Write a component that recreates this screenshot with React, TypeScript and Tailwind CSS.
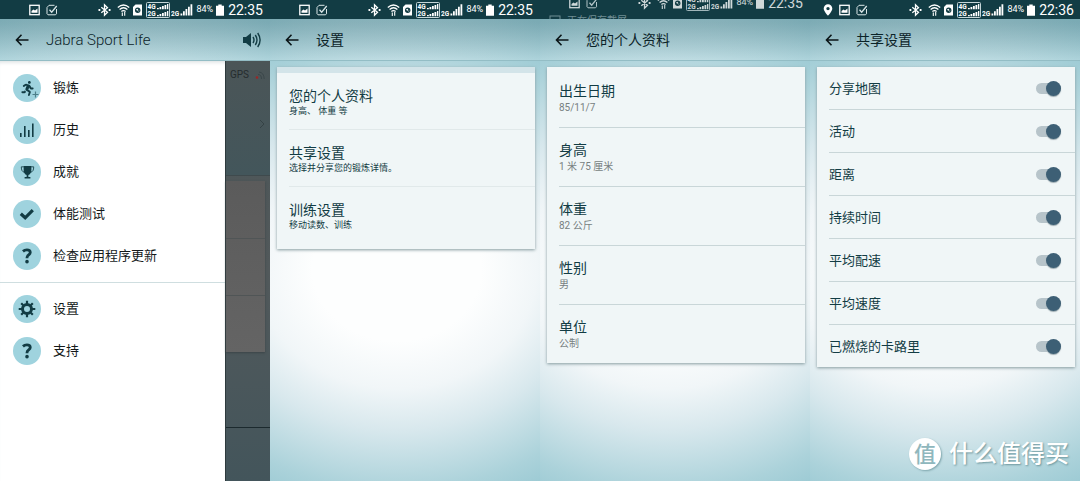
import type { ReactNode } from 'react';
import { FaRunning } from 'react-icons/fa';

const profileRows = [
  { title: '出生日期', value: '85/11/7' },
  { title: '身高', value: '1 米 75 厘米' },
  { title: '体重', value: '82 公斤' },
  { title: '性别', value: '男' },
  { title: '单位', value: '公制' },
];

const settingsRows = [
  { title: '您的个人资料', value: '身高、 体重 等' },
  { title: '共享设置', value: '选择并分享您的锻炼详情。' },
  { title: '训练设置', value: '移动读数、训练' },
];

const shareRows = ['分享地图', '活动', '距离', '持续时间', '平均配速', '平均速度', '已燃烧的卡路里'];

const screenBg =
  'bg-[radial-gradient(130%_62%_at_47%_56%,#fdfefe_24%,#f1f6f8_40%,#d8e8ed_54%,#abd2da_74%,#8cc2cd_92%)]';

function BarsIcon() {
  return (
    <svg width="16" height="16" viewBox="0 0 16 16" fill="#123c44">
      <rect x="1" y="11" width="1.6" height="4" />
      <rect x="5" y="4" width="1.6" height="11" />
      <rect x="9" y="8" width="1.6" height="7" />
      <rect x="13" y="1.5" width="1.6" height="13.5" />
    </svg>
  );
}

function RunIcon() {
  return (
    <span className="relative">
      <FaRunning size={15} color="#123c44" />
      <svg className="absolute -right-1 -bottom-0.5" width="7" height="7" viewBox="0 0 7 7">
        <path d="M3.5 .5v6M.5 3.5h6" stroke="#4d7f89" strokeWidth="1.2" />
      </svg>
    </span>
  );
}

function TrophyIcon() {
  return (
    <svg width="15" height="15" viewBox="0 0 14 14" fill="#123c44">
      <path d="M3.4 1h7.2v3.6c0 2.6-1.2 4.2-2.8 4.7v1.9h1.9v1.5H4.3v-1.5h1.9V9.3C4.6 8.8 3.4 7.2 3.4 4.6z" />
      <path
        d="M3.6 1.7H1.2c0 3 .9 4.7 3 5.2M10.4 1.7h2.4c0 3-.9 4.7-3 5.2"
        fill="none"
        stroke="#123c44"
        strokeWidth=".8"
      />
    </svg>
  );
}

function CheckIcon() {
  return (
    <svg width="16" height="14" viewBox="0 0 16 14">
      <path d="M1.8 6.8l4.4 4 7.6-7.6" fill="none" stroke="#123c44" strokeWidth="3.2" />
    </svg>
  );
}

function HelpIcon() {
  return (
    <svg width="14" height="18" viewBox="0 0 12 16">
      <path
        d="M2.4 3.9C3.400 3 4.600 2.600 5.900 2.600c1.900 0 3 .9 3 2.300 0 2.200-2.900 2.200-2.900 4.600v.5"
        fill="none"
        stroke="#123c44"
        strokeWidth="2.5"
      />
      <circle cx="6" cy="13" r="1.600" fill="#123c44" />
    </svg>
  );
}

function GearIcon() {
  return (
    <svg width="18" height="18" viewBox="-9 -9 18 18" fill="none" stroke="#123c44">
      <circle r="4.500" strokeWidth="3" />
      <path
        d="M0-8.300V-5M0 5v3.300M-8.300 0H-5M5 0h3.300M-5.800-5.800l2 2M3.800 3.800l2 2M5.800-5.800l-2 2M-3.800 3.800l-2 2"
        strokeWidth="2.200"
      />
    </svg>
  );
}

const drawerMain = [
  { label: '锻炼', icon: <RunIcon /> },
  { label: '历史', icon: <BarsIcon /> },
  { label: '成就', icon: <TrophyIcon /> },
  { label: '体能测试', icon: <CheckIcon /> },
  { label: '检查应用程序更新', icon: <HelpIcon /> },
];

const drawerExtra = [
  { label: '设置', icon: <GearIcon /> },
  { label: '支持', icon: <HelpIcon /> },
];

function StatusIcons({ time, pin }: { time: string; pin?: boolean }) {
  return (
    <div className={`flex h-[19px] shrink-0 items-center justify-between ${pin ? 'pr-[6px] pl-[13px]' : 'pr-[7px] pl-[29px]'}`}>
      <div className="flex items-center gap-[6px]">
        {pin && (
          <svg width="10" height="12" viewBox="0 0 10 12" fill="#fff" fillRule="evenodd">
            <path d="M5 .3A4.300 4.300 0 0 0 .7 4.600C.7 7.500 5 11.800 5 11.800s4.300-4.300 4.300-7.200A4.300 4.300 0 0 0 5 .3zm0 2.600a1.700 1.700 0 1 1 0 3.400 1.700 1.700 0 0 1 0-3.400z" />
          </svg>
        )}
        <svg width="11" height="12" viewBox="0 0 11 12" fill="none">
          <rect x=".8" y="1.300" width="9.400" height="9.400" stroke="#fff" strokeWidth="1.300" />
          <path d="M2.500 8.800V7l2-1.500 1.500 1 2.500-2v4.300z" fill="#fff" />
        </svg>
        <svg width="12" height="12" viewBox="0 0 12 12" fill="none" stroke="#dbe7e9">
          <path d="M8.500 1.300H3L1 3.500v6.300l1 1h7.500l1-1V5" />
          <path d="M3.500 5.800l2.200 2.400 5-6.200" strokeWidth="1.300" />
        </svg>
      </div>
      <div className="flex items-center">
        <svg width="13" height="14" viewBox="0 0 13 14" fill="none" stroke="#fff" strokeWidth="1.300">
          <path d="M3.300 4.300l6.200 5-3 3V1.700l3 3-6.200 5" />
          <path d="M.5 7h1.800M10.700 7h1.800" strokeWidth="1.800" />
        </svg>
        <svg className="ml-[6px]" width="13" height="14" viewBox="0 0 13 14" fill="none" stroke="#fff" strokeWidth="1.300">
          <path d="M.8 4.500Q6.500-.5 12.200 4.500M2.600 6.500q3.900-3.500 7.800 0M4.400 8.500q2.100-1.700 4.200 0" />
          <path d="M5.300 13V9.500M7.700 9v3.800" strokeWidth="1.100" />
        </svg>
        <svg className="ml-[3px]" width="9" height="12" viewBox="0 0 9 12">
          <path d="M2.500.5H9v11H0V3z" fill="#fff" />
          <circle cx="4.700" cy="6.300" r="2.700" fill="#123c44" />
          <path d="M3 5.500l1.500-.8.700 1L4.300 7zM5.500 6.500l1 .3-.8 1.200z" fill="#fff" />
        </svg>
        <svg className="ml-[4px]" width="24" height="16" viewBox="0 0 24 16" fill="#fff">
          <rect x=".5" y=".5" width="23" height="15" rx="1" fill="none" stroke="#c5d5d8" />
          <text x="1.500" y="7" fontSize="6.500" fontWeight="700">4G</text>
          <text x="1.500" y="14" fontSize="6.500" fontWeight="700">2G</text>
          <path d="M11 7.300V6h1.800v1.300zM13.500 7.300V5h1.800v2.300zM16 7.300V4h1.800v3.300zM18.500 7.300V3h1.800v4.300zM21 7.300V2h1.300v5.300z" />
          <path d="M11 14.300V13h1.800v1.300zM13.500 14.300V12h1.800v2.300zM16 14.300V11h1.800v3.300zM18.500 14.300V10h1.800v4.300zM21 14.300V9h1.300v5.300z" />
        </svg>
        <svg className="ml-px" width="22" height="14" viewBox="0 0 22 14" fill="#fff">
          <text x="0" y="12.500" fontSize="6.500" fontWeight="700">2G</text>
          <path d="M9.500 12.500V10.500h1.800v2zM12 12.500V8.300h1.800v4.200zM14.500 12.500V6h1.800v6.500zM17 12.500V3.700h1.800v8.800zM19.500 12.500V1.300h1.800v11.200z" />
        </svg>
        <span className="ml-[3px] text-[9px] leading-none">84%</span>
        <svg className="ml-[3px]" width="8" height="12" viewBox="0 0 8 12" fill="#fff">
          <path d="M2.300.5h3.400v1.200H8v10H0v-10h2.300z" />
        </svg>
        <span className="ml-[4px] text-[14px] leading-none">{time}</span>
      </div>
    </div>
  );
}

function StatusBar({ children }: { children: ReactNode }) {
  return (
    <div className="flex h-[19px] shrink-0 flex-col overflow-hidden bg-[#123c44] text-white">{children}</div>
  );
}

function Toolbar({ title, children }: { title: string; children?: ReactNode }) {
  return (
    <header className="flex h-[42px] shrink-0 items-center border-b border-[#93bdc5] bg-linear-to-b from-black/12 to-white/15 pt-px pr-[8px] pl-[15px] text-[#0b2328]">
      <button type="button" aria-label="返回" className="mr-[17px]">
        <svg width="14" height="12" viewBox="0 0 14 12" fill="none" stroke="#0b1517" strokeWidth="1.600">
          <path d="M6.500 .8L1.500 6l5 5.200M1.500 6h12" />
        </svg>
      </button>
      {children ?? <h1 className="text-[14px]">{title}</h1>}
    </header>
  );
}

function DrawerItem({ label, icon }: { label: string; icon: ReactNode }) {
  return (
    <li>
      <button type="button" className="flex h-[42px] w-full items-center gap-3 px-[13px] text-left text-[13px] text-[#14191a]">
        <span className="flex size-[28px] items-center justify-center rounded-full bg-[#9fd3de]">{icon}</span>
        {label}
      </button>
    </li>
  );
}

// Main page of the app, dimmed while the drawer is open
function DimmedPage() {
  return (
    <div className="flex flex-1 flex-col border-l border-[#2e3a3d] bg-linear-to-b from-[#4b5557] via-[#52595b] to-[#43555b] text-[#252c2e]">
      <div className="flex h-[115px] flex-col justify-between border-b border-[#3f4a4d] bg-linear-to-b from-[#4b5557] to-[#43565b] pt-[6px] pr-[4px] pl-[4px]">
        <div className="flex items-center justify-between text-[10px]">
          GPS
          <svg width="11" height="10" viewBox="0 0 11 10" fill="none" stroke="#3b474a">
            <path d="M3 4.500q3.500 0 3.500 4.500M4 2q5 .500 5.200 7" />
            <circle cx="2" cy="7.500" r="1.300" fill="#9b2626" stroke="none" />
          </svg>
        </div>
        <svg className="mb-[46px] self-end" width="8" height="10" viewBox="0 0 8 10" fill="none" stroke="#354245">
          <path d="M2 1l4 4-4 4" />
        </svg>
      </div>
      <div className="mt-[5px] mr-[5px] flex flex-col bg-linear-to-b from-[#5b5b5b] to-[#646464] shadow-[0_1px_2px_#3b4447]">
        <div className="h-[58px] border-b border-[#505556]" />
        <div className="h-[57px] border-b border-[#505556]" />
        <div className="h-[56px]" />
      </div>
      <div className="mt-[75px] flex-1 border-t border-[#1c2a2e]" />
    </div>
  );
}

function Card({ className = '', children }: { className?: string; children: ReactNode }) {
  return (
    <ul className={`mt-[6px] mr-[5px] ml-[7px] bg-[#f0f6f7] text-[#123c44] shadow-[0_1px_3px_#849a9e] ${className}`}>
      {children}
    </ul>
  );
}

export default function App() {
  return (
    <main className="relative grid min-h-screen grid-cols-4 font-[Roboto,'Noto_Sans_CJK_SC',sans-serif]">
      <section className={`flex flex-col ${screenBg}`}>
        <StatusBar>
          <StatusIcons time="22:35" />
        </StatusBar>
        <Toolbar title="Jabra Sport Life">
          <h1 className="flex-1 text-[15px] font-light">Jabra Sport Life</h1>
          <button type="button" aria-label="音量">
            <svg width="20" height="18" viewBox="0 0 20 18" fill="none" stroke="#123c44" strokeWidth="1.400">
              <path d="M1 6h3l5-4v14l-5-4H1z" fill="#123c44" stroke="none" />
              <path d="M11 6q2 3 0 6M13.300 4q3.400 5 0 10M15.700 2q4.800 7 0 14" />
            </svg>
          </button>
        </Toolbar>
        <div className="flex flex-1">
          <nav className="w-5/6 bg-white pt-[6px] shadow-[inset_0_4px_4px_-3px_#d5dcde]">
            <ul>
              {drawerMain.map((item) => (
                <DrawerItem key={item.label} {...item} />
              ))}
            </ul>
            <ul className="mt-[5px] border-t border-[#cfdee0] pt-[5px]">
              {drawerExtra.map((item) => (
                <DrawerItem key={item.label} {...item} />
              ))}
            </ul>
          </nav>
          <DimmedPage />
        </div>
      </section>

      <section className={`flex flex-col ${screenBg}`}>
        <StatusBar>
          <StatusIcons time="22:35" />
        </StatusBar>
        <Toolbar title="设置" />
        <Card className="border-t-[6px] border-[#d3e4e9] pb-[6px]">
          {settingsRows.map((row) => (
            <li key={row.title} className="ml-[12px] border-b border-[#e1e9ea] last:border-b-0">
              <button type="button" className="flex h-[56px] w-full flex-col justify-center pt-[2px] text-left">
                <span className="text-[14px] leading-[18px]">{row.title}</span>
                <span className="text-[9px] leading-[12px]">{row.value}</span>
              </button>
            </li>
          ))}
        </Card>
      </section>

      <section className={`flex flex-col ${screenBg}`}>
        <StatusBar>
          <div className="-mt-[7px] opacity-80">
            <StatusIcons time="22:35" />
          </div>
          <div className="flex items-center gap-[6px] pl-[9px] text-[10px] leading-[18px] text-[#6f8d93]">
            <svg width="12" height="12" viewBox="0 0 12 12" fill="none" stroke="#6f8d93">
              <rect x="1" y="1" width="10" height="10" />
            </svg>
            正在保存截屏
          </div>
        </StatusBar>
        <Toolbar title="您的个人资料" />
        <Card className="pt-[2px]">
          {profileRows.map((row) => (
            <li key={row.title} className="ml-[12px] border-b border-[#c9d6d8] last:border-b-0">
              <button type="button" className="flex h-[58px] w-full flex-col justify-center pt-[2px] text-left">
                <span className="text-[14px] leading-[18px]">{row.title}</span>
                <span className="text-[10px] leading-[16px] text-[#777f81]">{row.value}</span>
              </button>
            </li>
          ))}
        </Card>
      </section>

      <section className={`flex flex-col ${screenBg}`}>
        <StatusBar>
          <StatusIcons time="22:36" pin />
        </StatusBar>
        <Toolbar title="共享设置" />
        <Card>
          {shareRows.map((label) => (
            <li key={label} className="ml-[12px] border-b border-[#c9d6d8] last:border-b-0">
              <label className="flex h-[42px] items-center justify-between pt-px pr-[14px] text-[13px]">
                {label}
                <input
                  type="checkbox"
                  defaultChecked
                  className="flex h-[11px] w-[25px] appearance-none items-center rounded-full bg-[#b7c4ca] before:size-[15px] before:shrink-0 before:rounded-full before:bg-white before:shadow-[0_1px_1px_#9aa9af] checked:justify-end checked:before:bg-[#3d5f75]"
                />
              </label>
            </li>
          ))}
        </Card>
      </section>

      <div className="absolute right-[11px] bottom-[9px] flex items-center gap-[8px] text-[24px] font-medium text-white [text-shadow:1px_1px_2px_#6b959c]">
        <span className="flex size-[32px] items-center justify-center rounded-full bg-white text-[22px] text-[#8fb7bd] shadow-[1px_1px_2px_#7fa6ad] [text-shadow:none]">
          值
        </span>
        什么值得买
      </div>
    </main>
  );
}
